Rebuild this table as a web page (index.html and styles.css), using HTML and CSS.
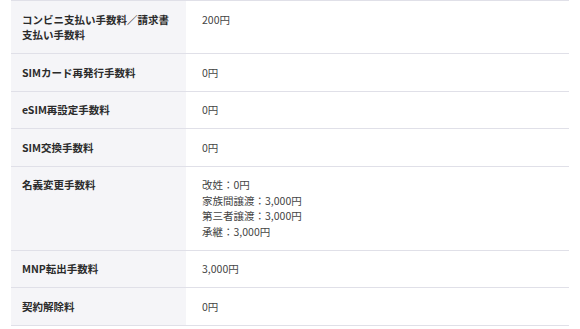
FILE: index.html
```html
<!DOCTYPE html>
<html lang="ja">
<head>
<meta charset="utf-8">
<link rel="stylesheet" href="styles.css">
</head>
<body>
<table class="fees">
  <tr><th>コンビニ支払い手数料／請求書支払い手数料</th><td>200円</td></tr>
  <tr><th>SIMカード再発行手数料</th><td>0円</td></tr>
  <tr><th>eSIM再設定手数料</th><td>0円</td></tr>
  <tr><th>SIM交換手数料</th><td>0円</td></tr>
  <tr><th>名義変更手数料</th><td>改姓：0円<br>家族間譲渡：3,000円<br>第三者譲渡：3,000円<br>承継：3,000円</td></tr>
  <tr><th>MNP転出手数料</th><td>3,000円</td></tr>
  <tr><th>契約解除料</th><td>0円</td></tr>
</table>
</body>
</html>
```
FILE: styles.css
```css
html, body {
  margin: 0;
  padding: 0;
  background: #ffffff;
}
body {
  font-family: "Noto Sans CJK JP", "Noto Sans", sans-serif;
  color: #333333;
}
.fees {
  margin-left: 11px;
  width: 558px;
  border-collapse: collapse;
  border-top: 1px solid #e0e0e8;
}
.fees th, .fees td {
  border-bottom: 1px solid #e0e0e8;
  vertical-align: top;
  text-align: left;
  font-size: 10.5px;
  padding: 10.5px 16px 10.5px 16px;
}
.fees th {
  width: 175px;
  box-sizing: border-box;
  padding-left: 11px;
  padding-right: 10px;
  background: #f5f5f8;
  font-weight: 700;
  line-height: 15.5px;
  color: #2b2b2b;
}
.fees td {
  font-weight: 400;
  line-height: 15.5px;
  color: #444444;
}
```
